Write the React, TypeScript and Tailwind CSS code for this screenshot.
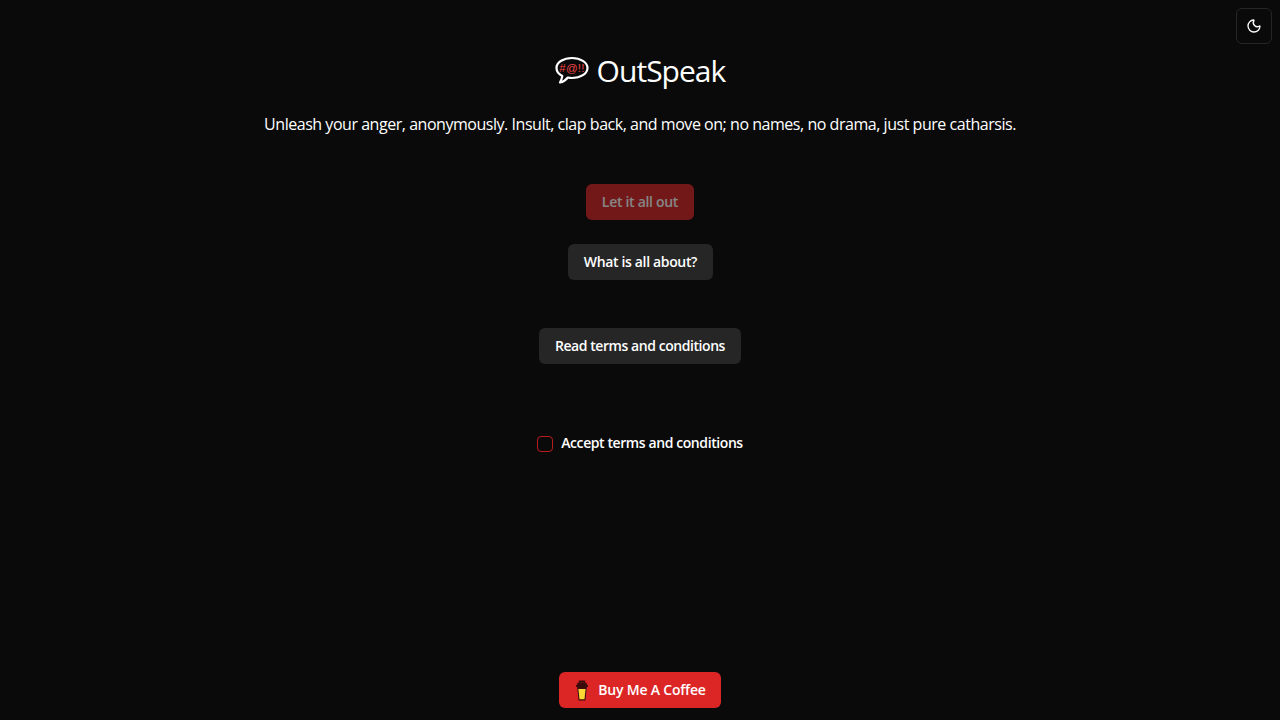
import React from 'react';
import { Moon } from 'lucide-react';

const font = "font-['Open_Sans','Noto_Sans',sans-serif]";

const Logo = () => (
  <svg width="34" height="30" viewBox="0 0 34 30" fill="none">
    <path
      d="M17 2C8.700 2 1.500 6 1.500 12c0 3.400 2.300 6.200 5.800 8-.2 2-1 4-2.300 6.500 3.200-.6 6-2.600 7.800-5 1.300.3 2.800.5 4.200.5 8.300 0 15.500-4.200 15.500-10S25.300 2 17 2z"
      stroke="white"
      strokeWidth="2.200"
      strokeLinejoin="round"
    />
    <text x="17" y="16" textAnchor="middle" fontSize="11.500" fill="#ef4444" fontFamily="'Liberation Sans', sans-serif" letterSpacing="0.200">
      #@!!
    </text>
  </svg>
);

const CoffeeCup = () => (
  <svg width="16" height="21" viewBox="0 0 16 21" fill="none">
    <path d="M3.200 7l1.400 13.500h6.800L12.800 7H3.200z" fill="#3b0a0a" />
    <path d="M4.400 9h7.200l-1.100 10.300h-5L4.400 9z" fill="#fdd835" />
    <path d="M3.800 2.500h8.400l1 2.500H2.800l1-2.500z" fill="#3b0a0a" />
    <rect x="1.800" y="5" width="12.400" height="2" rx="1" fill="#3b0a0a" />
    <rect x="4.800" y="0.500" width="6.400" height="2" rx="0.500" fill="#3b0a0a" />
  </svg>
);

const App: React.FC = () => {
  return (
    <div className={`${font} relative flex min-h-screen flex-col items-center bg-[#0a0a0a] text-white`}>
      <button className="absolute right-2 top-2 flex h-9 w-9 items-center justify-center rounded-md border border-[#262626] bg-[#0a0a0a]">
        <Moon className="h-4 w-4" />
      </button>

      <main className="flex flex-1 flex-col items-center pt-[53px]">
        <div className="flex h-9 items-center gap-2">
          <Logo />
          <h1 className="text-3xl font-normal tracking-[-0.97px]">OutSpeak</h1>
        </div>
        <p className="mt-[23px] text-base leading-6 tracking-[-0.465px]">
          Unleash your anger, anonymously. Insult, clap back, and move on; no names, no drama, just pure catharsis.
        </p>

        <button className="mt-[48px] h-9 w-[108px] rounded-md bg-[#dc2626] text-sm font-semibold tracking-[-0.3px] opacity-50">
          Let it all out
        </button>
        <button className="ml-px mt-6 h-9 w-[145px] rounded-md bg-[#262626] text-sm font-semibold tracking-[-0.35px]">
          What is all about?
        </button>
        <button className="mt-12 h-9 w-[202px] rounded-md bg-[#262626] text-sm font-semibold tracking-[-0.44px]">
          Read terms and conditions
        </button>

        <label className="mt-[69px] flex items-center gap-2 text-sm font-semibold tracking-[-0.41px]">
          <span className="h-4 w-4 rounded-[4px] border border-[#b91c1c]" />
          <span className="mb-0.5">Accept terms and conditions</span>
        </label>
      </main>

      <footer className="pb-3">
        <a className="flex h-9 w-[162px] items-center justify-center gap-2 rounded-md bg-[#dc2626] text-sm font-semibold tracking-[-0.2px]">
          <CoffeeCup />
          Buy Me A Coffee
        </a>
      </footer>
    </div>
  );
};

export default App;
